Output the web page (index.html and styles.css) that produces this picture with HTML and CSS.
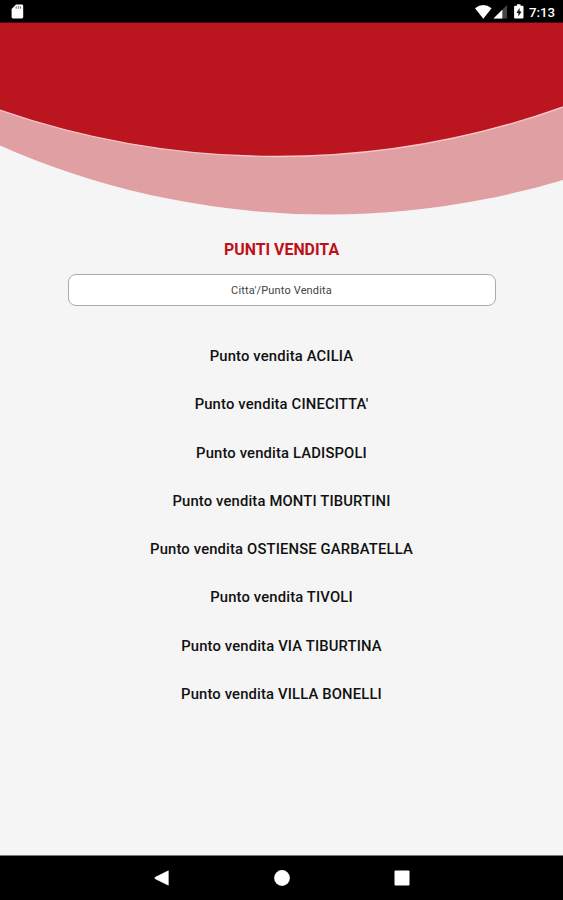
FILE: index.html
```html
<!DOCTYPE html>
<html lang="it">
<head>
<meta charset="utf-8">
<title>Punti vendita</title>
<link rel="stylesheet" href="styles.css">
</head>
<body>
<div class="screen">
  <header class="status">
    <svg class="sd" width="13" height="16" viewBox="0 0 13 16"><path d="M5 .5h5.800q1.400 0 1.400 1.400v11.200q0 1.400-1.400 1.400H2q-1.400 0-1.400-1.400V5z" fill="#fff"/><path d="M5.200 2.200v2.500M7.300 2.200v2.500M9.400 2.200v2.500" stroke="#777" stroke-width="1.1"/></svg>
    <div class="indicators">
      <svg width="56" height="18" viewBox="475 3 56 18">
        <path d="M475 8.200Q483.300 1.800 491.600 8.200L483.300 18.700z" fill="#fff"/>
        <path d="M507 5v13.500h-13.500z" fill="#444"/>
        <path d="M502.300 9.700v8.800h-8.800z" fill="#fff"/>
        <path d="M517 4.300h3.500v1.500h2q1 0 1 1v10.700q0 1-1 1h-7.400q-1 0-1-1V6.800q0-1 1-1H517z" fill="#fff"/>
        <path d="M519.600 8l-3.200 5h2v3.600l3.200-5.200h-2z" fill="#111"/>
      </svg>
      <span class="clock">7:13</span>
    </div>
  </header>
  <svg class="hero" width="563" height="193" viewBox="0 23 563 193">
    <circle cx="328" cy="-600.5" r="815" fill="#e09fa3"/>
    <circle cx="277" cy="-693.5" r="850" fill="#bb1620" stroke="#f6c9cb" stroke-width="1.3"/>
  </svg>
  <main class="content">
    <h1 class="title">PUNTI VENDITA</h1>
    <input class="search" type="text" placeholder="Citta'/Punto Vendita" aria-label="Citta'/Punto Vendita">
    <ul class="stores">
      <li>Punto vendita ACILIA</li>
      <li>Punto vendita CINECITTA'</li>
      <li>Punto vendita LADISPOLI</li>
      <li>Punto vendita MONTI TIBURTINI</li>
      <li>Punto vendita OSTIENSE GARBATELLA</li>
      <li>Punto vendita TIVOLI</li>
      <li>Punto vendita VIA TIBURTINA</li>
      <li>Punto vendita VILLA BONELLI</li>
    </ul>
  </main>
  <nav class="navbar">
    <svg width="16" height="16" viewBox="0 0 16 16"><path d="M14.300 .8v14.400L1.200 8.700q-1-.7 0-1.400z" fill="#fff" stroke="#fff" stroke-width=".6" stroke-linejoin="round"/></svg>
    <svg width="16" height="16" viewBox="0 0 16 16"><circle cx="8" cy="8" r="7.900" fill="#fff"/></svg>
    <svg width="16" height="16" viewBox="0 0 16 16"><rect x=".5" y=".5" width="15" height="15" rx="1" fill="#fff"/></svg>
  </nav>
</div>
</body>
</html>
```
FILE: styles.css
```css
* { box-sizing: border-box; }
body { margin: 0; font-family: Roboto, sans-serif; background: #f5f5f5; }
.screen { display: flex; flex-direction: column; width: 563px; height: 900px; }
.status {
  display: flex;
  justify-content: space-between;
  height: 23px;
  padding: 3px 8px 0 11px;
  background: #000;
  border-bottom: 1px solid #4e080c;
}
.sd { margin-top: 1px; }
.indicators { display: flex; }
.clock {
  width: 26px;
  margin-left: -2px;
  color: #fff;
  font-size: 13.3px;
  font-weight: 500;
  line-height: 19px;
  white-space: nowrap;
}
.hero { display: block; flex: none; }
.content { flex: 1; display: flex; flex-direction: column; align-items: center; padding-top: 24px; }
.title { margin: 0; color: #bd1118; font-size: 15.9px; font-weight: 700; line-height: 20px; }
.search {
  width: 428px;
  height: 32px;
  margin-top: 14px;
  padding: 0;
  border: 1px solid #aaa;
  border-radius: 8px;
  background: #fff;
  font: 11px Roboto, sans-serif;
  letter-spacing: .15px;
  text-align: center;
}
.search::placeholder { color: #444; opacity: 1; }
.stores { margin: 26px 0 0; padding: 0; list-style: none; text-align: center; }
.stores li {
  height: 48.25px;
  color: #111;
  font-size: 14.8px;
  font-weight: 500;
  letter-spacing: .15px;
  line-height: 48px;
}
.navbar {
  display: flex;
  justify-content: center;
  align-items: center;
  gap: 104px;
  height: 45px;
  border-top: 1px solid #777;
  background: #000;
}
```
